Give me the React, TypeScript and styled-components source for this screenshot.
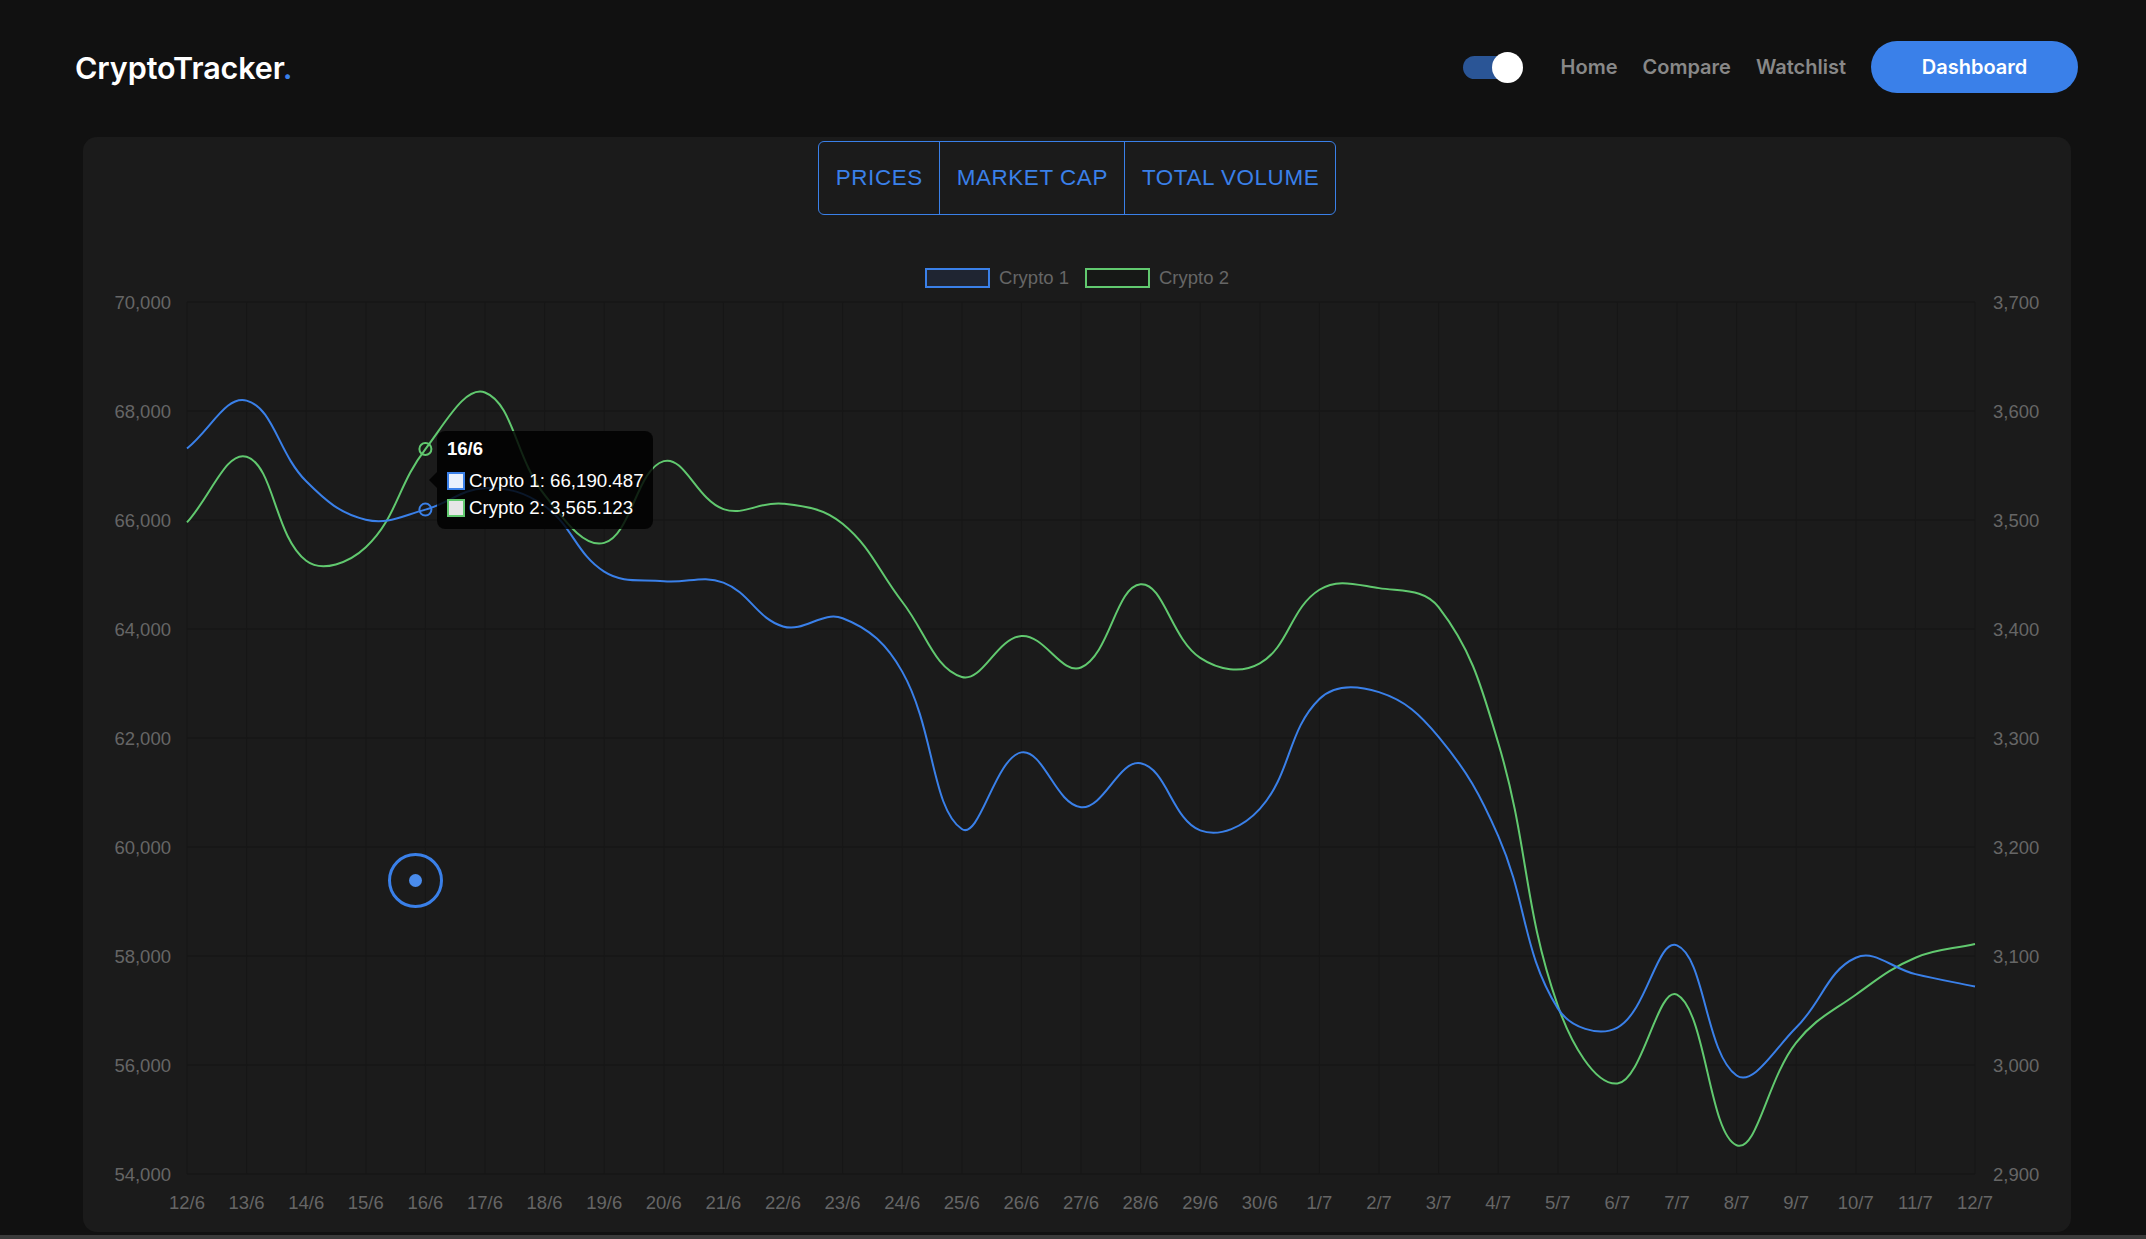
import React from 'react';
import styled, { createGlobalStyle } from 'styled-components';

const BLUE = '#3a80e9';
const GREEN = '#61c96f';

const GlobalStyle = createGlobalStyle`
  html, body {
    margin: 0;
    padding: 0;
    background: #111111;
  }
  body {
    font-family: Inter, "Liberation Sans", sans-serif;
    overflow: hidden;
  }
`;

const Page = styled.div`
  position: relative;
  height: 1239px;
  overflow: hidden;
`;

const Header = styled.header`
  height: 134px;
  display: flex;
  align-items: center;
  justify-content: space-between;
  padding: 0 68px 0 75px;
`;

const Logo = styled.h1`
  margin: 0;
  font-size: 30.5px;
  font-weight: 600;
  color: #ffffff;
  letter-spacing: -0.1px;

  span {
    color: ${BLUE};
  }
`;

const Nav = styled.nav`
  display: flex;
  align-items: center;
  gap: 25px;
`;

const Toggle = styled.div`
  position: relative;
  width: 60px;
  height: 31px;
  margin-right: 13px;
`;

const Track = styled.div`
  position: absolute;
  left: 0;
  top: 4px;
  width: 52px;
  height: 23px;
  border-radius: 12px;
  background: #2a5596;
`;

const Knob = styled.div`
  position: absolute;
  right: 0;
  top: 0;
  width: 31px;
  height: 31px;
  border-radius: 50%;
  background: #ffffff;
`;

const NavLink = styled.a`
  font-size: 20px;
  font-weight: 600;
  color: #888888;
  text-decoration: none;
`;

const DashButton = styled.button`
  width: 207px;
  height: 52px;
  border: none;
  border-radius: 26px;
  background: ${BLUE};
  color: #ffffff;
  font-family: Inter, "Liberation Sans", sans-serif;
  font-size: 20px;
  font-weight: 600;
`;

const Panel = styled.main`
  margin: 3px 75px 0 83px;
  height: 1095px;
  border-radius: 14px;
  background: #1b1b1b;
  display: flex;
  flex-direction: column;
  align-items: center;
`;

const Tabs = styled.div`
  margin-top: 4px;
  display: flex;
  border: 1px solid ${BLUE};
  border-radius: 6px;
`;

const Tab = styled.div<{ first?: boolean }>`
  height: 72px;
  display: flex;
  align-items: center;
  padding: 0 16px 0 17px;
  border-left: ${p => (p.first ? 'none' : `1px solid ${BLUE}`)};
  font-family: "Liberation Sans", Arial, sans-serif;
  font-size: 22.4px;
  letter-spacing: 0.6px;
  color: ${BLUE};
  text-transform: uppercase;
`;

const Legend = styled.div`
  margin-top: 53px;
  height: 20px;
  display: flex;
  align-items: center;
  gap: 16px;
`;

const LegendItem = styled.div`
  display: flex;
  align-items: center;
  gap: 9px;
  font-family: "Liberation Sans", Arial, sans-serif;
  font-size: 18.5px;
  color: #666666;
`;

const LegendBox = styled.span<{ border: string; fill: string }>`
  box-sizing: border-box;
  width: 65px;
  height: 20px;
  border: 2px solid ${p => p.border};
  background: ${p => p.fill};
`;

const ChartArea = styled.div`
  position: relative;
  align-self: stretch;
  height: 944px;

  svg {
    display: block;
  }

  text {
    font-family: "Liberation Sans", Arial, sans-serif;
    font-size: 18.5px;
    fill: #666666;
  }
`;

const Tooltip = styled.div`
  position: absolute;
  left: 354px;
  top: 143px;
  box-sizing: border-box;
  height: 98px;
  padding: 8px 9px 10px 10px;
  border-radius: 8px;
  background: rgba(0, 0, 0, 0.82);
  color: #ffffff;
  font-family: "Liberation Sans", Arial, sans-serif;

  &::before {
    content: '';
    position: absolute;
    left: -8px;
    top: 41px;
    border-top: 8px solid transparent;
    border-bottom: 8px solid transparent;
    border-right: 8px solid rgba(0, 0, 0, 0.82);
  }
`;

const TipTitle = styled.div`
  height: 20px;
  line-height: 20px;
  font-size: 18.5px;
  font-weight: 700;
  margin-bottom: 11px;
`;

const TipRow = styled.div`
  height: 22px;
  display: flex;
  align-items: center;
  gap: 4px;
  font-size: 18.7px;
  white-space: nowrap;

  & + & {
    margin-top: 5px;
  }
`;

const TipSwatch = styled.span<{ border: string; fill: string }>`
  box-sizing: border-box;
  width: 18px;
  height: 18px;
  border: 2px solid ${p => p.border};
  background: ${p => p.fill};
`;

const Cursor = styled.div`
  position: absolute;
  left: 388px;
  top: 853px;
  box-sizing: border-box;
  width: 55px;
  height: 55px;
  border: 3px solid ${BLUE};
  border-radius: 50%;
  display: flex;
  align-items: center;
  justify-content: center;

  &::after {
    content: '';
    width: 13px;
    height: 13px;
    border-radius: 50%;
    background: #4a8cec;
  }
`;

const BottomStrip = styled.div`
  margin-top: 3px;
  height: 10px;
  background: #3b3b3b;
`;

const labels = [
  '12/6', '13/6', '14/6', '15/6', '16/6', '17/6', '18/6', '19/6', '20/6', '21/6',
  '22/6', '23/6', '24/6', '25/6', '26/6', '27/6', '28/6', '29/6', '30/6', '1/7',
  '2/7', '3/7', '4/7', '5/7', '6/7', '7/7', '8/7', '9/7', '10/7', '11/7', '12/7',
];

const crypto1 = [
  67312, 68191, 66710, 66006, 66190.487, 66584, 66257, 65052, 64876, 64851, 64047,
  64198, 63218, 60330, 61736, 60731, 61535, 60304, 60700, 62716, 62841, 62020,
  60204, 57039, 56687, 58195, 55808, 56687, 57968, 57667, 57441,
];

const crypto2 = [
  3497.8, 3558, 3462.6, 3475, 3565.123, 3617, 3523, 3479, 3554, 3510, 3515,
  3496.5, 3425, 3356, 3393.6, 3364.7, 3441, 3373.5, 3368.4, 3436, 3437.5, 3420,
  3295.6, 3054.5, 2983, 3064.5, 2926.4, 3020.6, 3064.5, 3098.4, 3111,
];

// plot box inside the chart svg
const LEFT = 104;
const RIGHT = 1892;
const TOP = 14;
const BOTTOM = 886;
const STEP = (RIGHT - LEFT) / (labels.length - 1);
const HOVER = 4;

const xAt = (i: number) => LEFT + i * STEP;
const yLeft = (v: number) => TOP + ((70000 - v) / 16000) * (BOTTOM - TOP);
const yRight = (v: number) => TOP + ((3700 - v) / 800) * (BOTTOM - TOP);

type Pt = { x: number; y: number };

// same control points as chart.js line tension
const splinePath = (pts: Pt[], t = 0.4) => {
  const cps = pts.map((p, i) => {
    const prev = pts[i - 1] ?? p;
    const next = pts[i + 1] ?? p;
    const d01 = Math.hypot(p.x - prev.x, p.y - prev.y);
    const d12 = Math.hypot(next.x - p.x, next.y - p.y);
    const total = d01 + d12 || 1;
    const fa = (t * d01) / total;
    const fb = (t * d12) / total;
    return {
      c1: { x: p.x - fa * (next.x - prev.x), y: p.y - fa * (next.y - prev.y) },
      c2: { x: p.x + fb * (next.x - prev.x), y: p.y + fb * (next.y - prev.y) },
    };
  });
  let d = `M${pts[0].x},${pts[0].y}`;
  for (let i = 1; i < pts.length; i++) {
    d += ` C${cps[i - 1].c2.x},${cps[i - 1].c2.y} ${cps[i].c1.x},${cps[i].c1.y} ${pts[i].x},${pts[i].y}`;
  }
  return d;
};

const fmt = (n: number) => n.toLocaleString('en-US');

const PriceChart = () => {
  const pts1 = crypto1.map((v, i) => ({ x: xAt(i), y: yLeft(v) }));
  const pts2 = crypto2.map((v, i) => ({ x: xAt(i), y: yRight(v) }));
  const rows = Array.from({ length: 9 }, (_, i) => i);

  return (
    <ChartArea>
      <svg width="1988" height="944" viewBox="0 0 1988 944">
        {rows.map(r => {
          const y = TOP + (r * (BOTTOM - TOP)) / 8;
          return (
            <g key={r}>
              <line x1={LEFT} x2={RIGHT} y1={y} y2={y} stroke="#151515" />
              <text x={88} y={y} textAnchor="end" dominantBaseline="central">
                {fmt(70000 - r * 2000)}
              </text>
              <text x={1910} y={y} dominantBaseline="central">
                {fmt(3700 - r * 100)}
              </text>
            </g>
          );
        })}
        {labels.map((l, i) => (
          <g key={l}>
            <line x1={xAt(i)} x2={xAt(i)} y1={TOP} y2={BOTTOM} stroke="#171717" />
            <text x={xAt(i)} y={914} textAnchor="middle" dominantBaseline="central">
              {l}
            </text>
          </g>
        ))}
        <path d={splinePath(pts2)} fill="none" stroke={GREEN} strokeWidth={2} />
        <path d={splinePath(pts1)} fill="none" stroke={BLUE} strokeWidth={2} />
        <circle cx={pts2[HOVER].x} cy={pts2[HOVER].y} r={6} fill="none" stroke={GREEN} strokeWidth={2} />
        <circle cx={pts1[HOVER].x} cy={pts1[HOVER].y} r={6} fill="none" stroke={BLUE} strokeWidth={2} />
      </svg>
      <Tooltip>
        <TipTitle>{labels[HOVER]}</TipTitle>
        <TipRow>
          <TipSwatch border={BLUE} fill="#e8f0fd" />
          Crypto 1: {fmt(crypto1[HOVER])}
        </TipRow>
        <TipRow>
          <TipSwatch border={GREEN} fill="#e6e6e6" />
          Crypto 2: {fmt(crypto2[HOVER])}
        </TipRow>
      </Tooltip>
    </ChartArea>
  );
};

const App = () => (
  <Page>
    <GlobalStyle />
    <Header>
      <Logo>
        CryptoTracker<span>.</span>
      </Logo>
      <Nav>
        <Toggle>
          <Track />
          <Knob />
        </Toggle>
        <NavLink>Home</NavLink>
        <NavLink>Compare</NavLink>
        <NavLink>Watchlist</NavLink>
        <DashButton>Dashboard</DashButton>
      </Nav>
    </Header>
    <Panel>
      <Tabs>
        <Tab first>Prices</Tab>
        <Tab>Market Cap</Tab>
        <Tab>Total Volume</Tab>
      </Tabs>
      <Legend>
        <LegendItem>
          <LegendBox border={BLUE} fill="#1f2532" />
          Crypto 1
        </LegendItem>
        <LegendItem>
          <LegendBox border={GREEN} fill="#161816" />
          Crypto 2
        </LegendItem>
      </Legend>
      <PriceChart />
    </Panel>
    <BottomStrip />
    <Cursor />
  </Page>
);

export default App;
